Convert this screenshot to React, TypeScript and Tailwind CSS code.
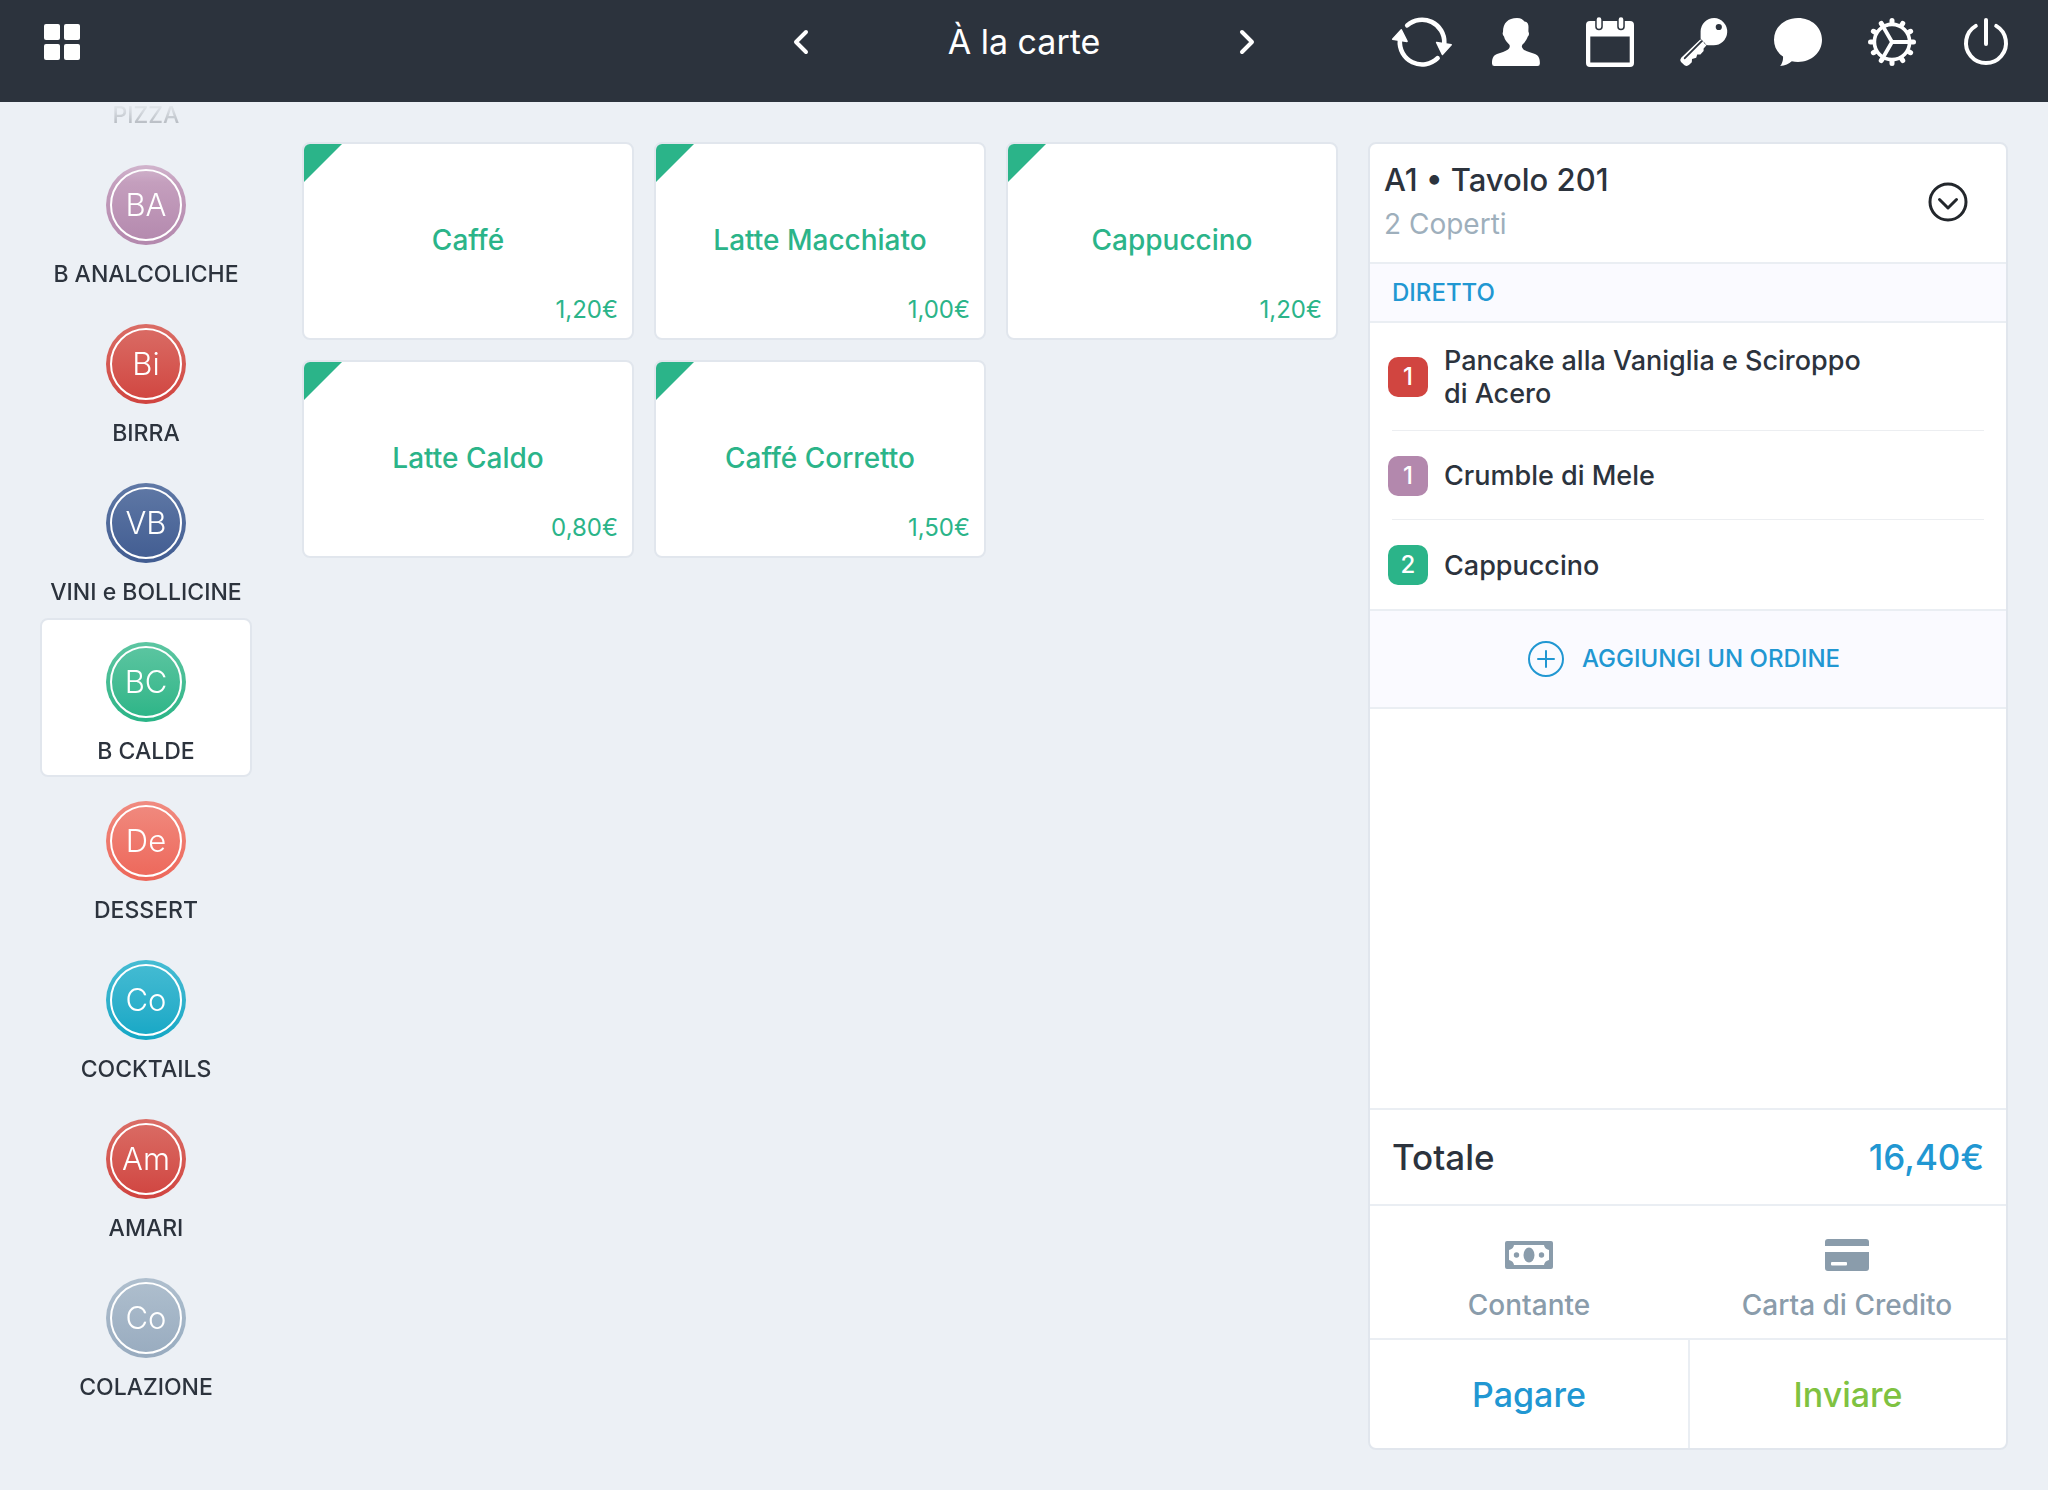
import { useState } from 'react';
import type { ReactNode } from 'react';

const categories = [
  { id: 'analcoliche', initials: 'BA', name: 'B ANALCOLICHE', color: 'from-[#c9a5c2] to-[#b388ad]' },
  { id: 'birra', initials: 'Bi', name: 'BIRRA', color: 'from-[#da6d66] to-[#d0433f]' },
  { id: 'vini', initials: 'VB', name: 'VINI e BOLLICINE', color: 'from-[#6079a6] to-[#415c91]' },
  { id: 'calde', initials: 'BC', name: 'B CALDE', color: 'from-[#5dc6a2] to-[#28b486]' },
  { id: 'dessert', initials: 'De', name: 'DESSERT', color: 'from-[#f08b80] to-[#ed6659]' },
  { id: 'cocktails', initials: 'Co', name: 'COCKTAILS', color: 'from-[#45bcd3] to-[#12a7c5]' },
  { id: 'amari', initials: 'Am', name: 'AMARI', color: 'from-[#da6d66] to-[#d0433f]' },
  { id: 'colazione', initials: 'Co', name: 'COLAZIONE', color: 'from-[#afbfce] to-[#98abbf]' },
];

const products = [
  { name: 'Caffé', price: '1,20€' },
  { name: 'Latte Macchiato', price: '1,00€' },
  { name: 'Cappuccino', price: '1,20€' },
  { name: 'Latte Caldo', price: '0,80€' },
  { name: 'Caffé Corretto', price: '1,50€' },
];

const orderItems = [
  { qty: 1, name: 'Pancake alla Vaniglia e Sciroppo di Acero', color: 'bg-[#d14540]' },
  { qty: 1, name: 'Crumble di Mele', color: 'bg-[#b388ad]' },
  { qty: 2, name: 'Cappuccino', color: 'bg-[#2bb489]' },
];

const gearTeeth = Array.from({ length: 12 }, (_, i) => i * 30);

function ToolbarButton({ label, children }: { label: string; children: ReactNode }) {
  return (
    <button type="button" aria-label={label}>
      <svg viewBox="0 0 48 48" className="block w-12 h-12 overflow-visible" fill="currentColor">
        {children}
      </svg>
    </button>
  );
}

function Toolbar() {
  return (
    <div className="flex items-center justify-end gap-[46px]">
      <ToolbarButton label="Sincronizza">
        <g fill="none" stroke="currentColor" strokeWidth="4.6" strokeLinecap="round">
          <path d="M9.2 7.4A22.3 22.3 0 0 1 46.3 25" />
          <path d="M39.6 40.2A22.3 22.3 0 0 1 1.9 22" />
        </g>
        <g stroke="currentColor" strokeWidth="1.5" strokeLinejoin="round">
          <path d="M38.6 24.4L53.2 26.8L44.4 36.4Z" />
          <path d="M9.1 23.4L-5.4 21.2L3.3 11.8Z" />
        </g>
      </ToolbarButton>
      <ToolbarButton label="Operatore">
        <path d="M25 0C29 0 31 1.600 32.500 3.500C35.500 3.800 36.500 6 36.500 9C36.500 10.500 36.300 12 36.500 14C37.300 15 37.200 17.200 35.800 18.600C34.800 22 32.500 24.500 30.500 26.500C29.300 28 29.800 30 31.500 31.400C34 33.500 39 34.300 43 36C47 37.800 47.900 41 47.900 45.500Q47.900 48 45.500 48H2.400Q0 48 0 45.500C0 41 0.800 37.800 5 36C9 34.300 13.500 33.500 16 31.400C17.800 30 18.300 28 17.200 26.500C15 24.500 12.800 22 12 18.600C10.600 17.200 10.300 15.500 11 14C11 5 16 0 25 0Z" />
      </ToolbarButton>
      <ToolbarButton label="Calendario">
        <path
          fillRule="evenodd"
          d="M4 3H44Q48 3 48 7V45Q48 49 44 49H4Q0 49 0 45V7Q0 3 4 3ZM4.300 18.500V44.500H43.700V18.500Z"
        />
        <g fill="none" strokeLinecap="round">
          <path d="M13 2V8.500M35 2V8.500" stroke="#2c333d" strokeWidth="7.600" />
          <path d="M13 1.500V8.500M35 1.500V8.500" stroke="currentColor" strokeWidth="4.600" />
        </g>
      </ToolbarButton>
      <ToolbarButton label="Accesso">
        <path
          fillRule="evenodd"
          d="M34.200 0A13.600 13.600 0 1 1 33 27.200H25.800L20.600 22V13.600A13.600 13.600 0 0 1 34.200 0ZM38.800 5.900A3.100 3.100 0 1 0 38.800 12.100A3.100 3.100 0 1 0 38.800 5.900Z"
        />
        <path d="M20.500 21.200L1.200 39.800Q-0.600 42 1 44L4.500 47.200Q7 48.800 9.200 46.800L11.800 44.200L12 41L16.200 39.800L17.200 36.400L20.400 36.400L23.600 33V30.500L26.600 27.300Z" />
        <path d="M21.500 23.300L4.800 40.200" stroke="#2c333d" strokeWidth="1.900" strokeLinecap="round" />
        <path d="M19.800 20.400L27.400 28" stroke="#2c333d" strokeWidth="0.900" strokeDasharray="2 1" />
      </ToolbarButton>
      <ToolbarButton label="Messaggi">
        <path d="M24 0C37.600 0 48 9.400 48 21.800C48 34.500 37.600 44 24 44C21.800 44 19.700 43.800 17.800 43.200C15 45.800 11 47.800 6.200 48C8.300 45.400 9.300 42 9 38.600C3.200 34.600 0 28.800 0 21.800C0 9.400 10.400 0 24 0Z" />
      </ToolbarButton>
      <ToolbarButton label="Impostazioni">
        <g fill="none" stroke="currentColor" strokeLinecap="round">
          <circle cx="24" cy="24" r="17.600" strokeWidth="3.600" />
          {gearTeeth.map((angle) => (
            <path key={angle} d="M24 4.500V2.500" strokeWidth="5" transform={`rotate(${angle} 24 24)`} />
          ))}
          <path d="M24 24H41M24 24L15.500 9.300M24 24L15.500 38.700" strokeWidth="3.800" />
        </g>
      </ToolbarButton>
      <ToolbarButton label="Esci">
        <g fill="none" stroke="currentColor" strokeWidth="4" strokeLinecap="round">
          <path d="M13.800 7.900A20 20 0 1 0 34.200 7.900" />
          <path d="M24 2V26" />
        </g>
      </ToolbarButton>
    </div>
  );
}

function Header() {
  return (
    <header className="grid grid-cols-[1fr_auto_1fr] items-center shrink-0 h-[102px] pb-[18px] px-[38px] bg-[#2c333d] text-white">
      <button type="button" aria-label="Menu" className="grid grid-cols-2 gap-1 w-9 ml-1.5">
        <span className="h-4 rounded-xs bg-white" />
        <span className="h-4 rounded-xs bg-white" />
        <span className="h-4 rounded-xs bg-white" />
        <span className="h-4 rounded-xs bg-white" />
      </button>

      <div className="flex items-center justify-between w-[462px]">
        <button type="button" aria-label="Precedente">
          <svg viewBox="0 0 16 26" className="block w-4 h-[26px]" fill="none" stroke="currentColor" strokeWidth="4" strokeLinecap="round" strokeLinejoin="round">
            <path d="M13 3L3 13L13 23" />
          </svg>
        </button>
        <h1 className="text-[34px] leading-10">À la carte</h1>
        <button type="button" aria-label="Successivo">
          <svg viewBox="0 0 16 26" className="block w-4 h-[26px]" fill="none" stroke="currentColor" strokeWidth="4" strokeLinecap="round" strokeLinejoin="round">
            <path d="M3 3L13 13L3 23" />
          </svg>
        </button>
      </div>

      <Toolbar />
    </header>
  );
}

function Sidebar({ selected, onSelect }: { selected: string; onSelect: (id: string) => void }) {
  return (
    <nav className="flex flex-col justify-end w-[212px] shrink-0 overflow-hidden pb-[77px] [mask-image:linear-gradient(transparent,black_80px)]">
      <button type="button" className="shrink-0 pb-[14px] text-[23px] leading-6 font-medium">
        PIZZA
      </button>
      {categories.map((category) => (
        <button
          key={category.id}
          type="button"
          onClick={() => onSelect(category.id)}
          className={`flex flex-col items-center shrink-0 h-[159px] pt-[22px] border-2 rounded-lg ${
            selected === category.id ? 'bg-white border-[#e1e6ed]' : 'border-transparent'
          }`}
        >
          <span className={`block size-20 p-1 rounded-full bg-linear-to-b ${category.color}`}>
            <span className="flex items-center justify-center size-full rounded-full border-2 border-white text-white text-[31px] font-light">
              {category.initials}
            </span>
          </span>
          <span className="mt-[13px] text-[23px] leading-8 font-medium whitespace-nowrap">{category.name}</span>
        </button>
      ))}
    </nav>
  );
}

function ProductCard({ name, price }: { name: string; price: string }) {
  return (
    <button
      type="button"
      className="relative flex flex-col h-[198px] px-3.5 pt-[66px] pb-2 overflow-hidden bg-white border-2 border-[#e1e6ed] rounded-lg text-[#2bb489]"
    >
      <span className="absolute top-0 left-0 size-[38px] bg-[#2bb489] [clip-path:polygon(0_0,100%_0,0_100%)]" />
      <span className="w-full text-center text-[28px] leading-[60px] font-medium">{name}</span>
      <span className="w-full mt-auto text-right text-[24px] leading-10">{price}</span>
    </button>
  );
}

function OrderPanel() {
  return (
    <aside className="flex flex-col w-[640px] shrink-0 overflow-hidden bg-white border-2 border-[#e1e6ed] rounded-lg">
      <div className="flex items-center justify-between h-[120px] pl-3.5 pr-[38px] pb-0.5 border-b-2 border-[#eaeef3]">
        <div>
          <h2 className="text-[31px] leading-[44px] font-medium">A1 • Tavolo 201</h2>
          <p className="text-[28px] leading-[44px] text-[#9eafbc]">2 Coperti</p>
        </div>
        <button type="button" aria-label="Dettagli tavolo">
          <svg viewBox="0 0 40 40" className="block size-10" fill="none" stroke="#23272c" strokeWidth="3" strokeLinecap="round" strokeLinejoin="round">
            <circle cx="20" cy="20" r="18" />
            <path d="M11.500 17.500L20 26L28.500 17.500" />
          </svg>
        </button>
      </div>

      <h3 className="px-[22px] bg-[#fafaff] border-b-2 border-[#eaeef3] text-[24px] leading-[57px] font-medium text-[#2197d2]">
        DIRETTO
      </h3>

      <ul className="px-[22px]">
        {orderItems.map((item) => (
          <li
            key={item.name}
            className="flex items-center min-h-[89px] pt-[21px] pb-5 border-b border-[#eceef1] last:border-b-0"
          >
            <span
              className={`flex items-center justify-center size-10 -ml-1 mr-4 shrink-0 rounded-[10px] text-[24px] font-medium text-white ${item.color}`}
            >
              {item.qty}
            </span>
            <span className="max-w-[440px] text-[27px] leading-[33px] font-medium">{item.name}</span>
          </li>
        ))}
      </ul>

      <button
        type="button"
        className="flex items-center justify-center gap-[18px] h-[100px] shrink-0 pr-2 bg-[#fafaff] border-y-2 border-[#eaeef3] text-[24px] font-medium text-[#2197d2]"
      >
        <svg viewBox="0 0 36 36" className="size-9" fill="none" stroke="currentColor" strokeWidth="2" strokeLinecap="round">
          <circle cx="18" cy="18" r="17" />
          <path d="M18 10V26M10 18H26" />
        </svg>
        AGGIUNGI UN ORDINE
      </button>

      <div className="mt-auto">
        <div className="flex items-center justify-between h-[98px] px-[22px] border-y-2 border-[#eaeef3] text-[35px] font-medium">
          <span>Totale</span>
          <span className="text-[#2197d2]">16,40€</span>
        </div>

        <div className="grid grid-cols-2 h-[134px] border-b-2 border-[#eaeef3] text-[28px] leading-10 font-medium text-[#8a9cab]">
          <button type="button" className="flex flex-col items-center pt-[33px]">
            <svg viewBox="0 0 48 32" className="w-12 h-8" fill="currentColor">
              <path
                fillRule="evenodd"
                d="M2 2H46Q48 2 48 4V28Q48 30 46 30H2Q0 30 0 28V4Q0 2 2 2ZM9 6Q8.500 10 4 11V21Q8.500 22 9 26H39Q39.500 22 44 21V11Q39.500 10 39 6Z"
              />
              <ellipse cx="24" cy="16" rx="5.500" ry="7.500" />
              <circle cx="11.500" cy="16" r="2.700" />
              <circle cx="36.500" cy="16" r="2.700" />
            </svg>
            <span className="mt-[14px]">Contante</span>
          </button>
          <button type="button" className="flex flex-col items-center pt-[33px]">
            <svg viewBox="0 0 44 32" className="w-11 h-8" fill="currentColor">
              <path d="M3 0H41Q44 0 44 3V7H0V3Q0 0 3 0Z" />
              <path
                fillRule="evenodd"
                d="M0 13H44V29Q44 32 41 32H3Q0 32 0 29ZM7 23Q6 23 6 24V25.500Q6 26.500 7 26.500H21Q22 26.500 22 25.500V24Q22 23 21 23Z"
              />
            </svg>
            <span className="mt-[14px]">Carta di Credito</span>
          </button>
        </div>

        <div className="grid grid-cols-2 h-[108px] text-[34px] font-medium">
          <button type="button" className="text-[#2197d2]">
            Pagare
          </button>
          <button type="button" className="border-l-2 border-[#eaeef3] text-[#7fc241]">
            Inviare
          </button>
        </div>
      </div>
    </aside>
  );
}

export default function App() {
  const [selected, setSelected] = useState('calde');

  return (
    <div className="flex flex-col h-screen bg-[#ecf0f5] text-[#2c333d] font-['Inter',sans-serif]">
      <Header />
      <div className="flex flex-1 min-h-0 px-10">
        <Sidebar selected={selected} onSelect={setSelected} />
        <main className="flex-1 ml-[50px] mr-[30px] pt-10">
          <div className="grid grid-cols-3 gap-5">
            {products.map((product) => (
              <ProductCard key={product.name} name={product.name} price={product.price} />
            ))}
          </div>
        </main>
        <div className="flex pt-10 pb-10">
          <OrderPanel />
        </div>
      </div>
    </div>
  );
}
